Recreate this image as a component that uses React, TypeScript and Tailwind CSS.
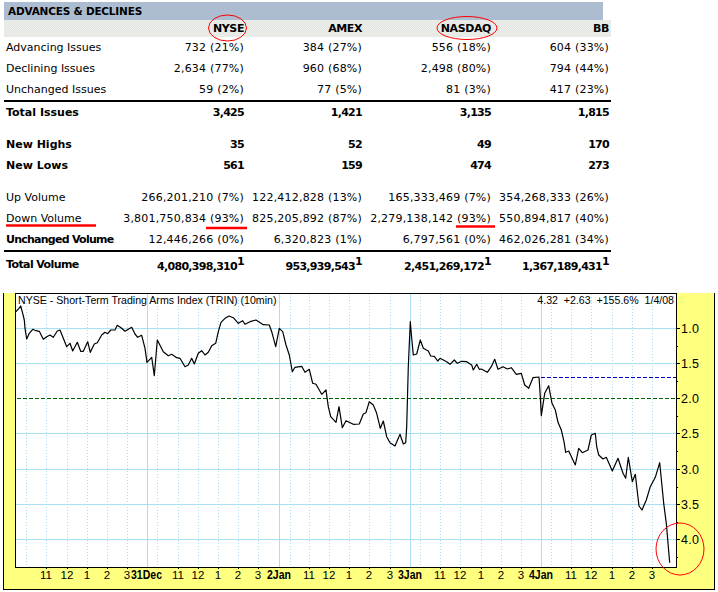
const rows = [
  { label: 'Advancing Issues', vals: ['732 (21%)', '384 (27%)', '556 (18%)', '604 (33%)'] },
  { label: 'Declining Issues', vals: ['2,634 (77%)', '960 (68%)', '2,498 (80%)', '794 (44%)'] },
  { label: 'Unchanged Issues', vals: ['59 (2%)', '77 (5%)', '81 (3%)', '417 (23%)'] },
];
const highLow = [
  { label: 'New Highs', vals: ['35', '52', '49', '170'] },
  { label: 'New Lows', vals: ['561', '159', '474', '273'] },
];
const volume = [
  { label: 'Up Volume', vals: ['266,201,210 (7%)', '122,412,828 (13%)', '165,333,469 (7%)', '354,268,333 (26%)'] },
  { label: 'Down Volume', vals: ['3,801,750,834 (93%)', '825,205,892 (87%)', '2,279,138,142 (93%)', '550,894,817 (40%)'] },
];

const grid = 'grid grid-cols-[116px_124px_118px_129px_118px] w-[607px] items-center';

function Row({ label, vals, bold, labelBold }: { label: string; vals: string[]; bold?: boolean; labelBold?: boolean }) {
  return (
    <div className={`${grid} h-[21px] ${bold ? 'font-bold' : ''}`}>
      <div className={`pl-[2px] whitespace-nowrap ${labelBold ? 'font-bold tracking-[-0.75px]' : ''}`}>{label}</div>
      {vals.map((v, i) => (
        <div key={i} className={`text-right whitespace-nowrap ${bold ? 'tracking-[-0.7px]' : 'tracking-[0.2px]'}`}>{v}</div>
      ))}
    </div>
  );
}

const pts5 = '48,65 57,55 62,48 68,70 73,90 75,115 80,147 88,130 98,118 108,122 118,124 130,148 140,140 150,135 160,142 172,123 180,120 190,145 200,170 210,160 218,183 232,157 242,184 250,184 263,155 271,187 283,162 292,158 305,135 315,127 323,131 332,120 345,120 352,106 365,115 375,124 385,118 395,112 405,132 413,142 425,136 435,175 441,217 455,202 463,257 472,150 490,185 505,197 515,193 530,203 540,205 555,230 565,225 575,205 583,222 595,190 605,182 615,195 625,187 635,167 647,160 655,125 663,97 675,85 687,78 700,83 715,100';
const pts7 = '8,92 15,103 30,95 48,90 70,104 88,105 95,125 107,170 118,115 128,125 138,165 148,195 157,245 165,232 185,229 195,247 208,238 218,280 228,283 245,313 258,300 265,350 272,380 288,397 297,350 307,413 318,392 340,403 358,402 370,372 378,368 388,335 400,345 410,370 421,415 430,393 440,440 450,458 465,468 480,433 490,462 497,458 500,410 505,230 511,95 515,145 520,195 530,192 541,150 550,175 565,183 572,198 583,199 593,213 600,205 620,215 630,223 643,210 652,220 665,214 680,215 695,225 700,240 710,223 718,238';
const pts9 = '10,237 28,247 40,230 50,208 60,238 75,230 88,237 100,233 115,253 130,250 140,285 152,295 165,263 183,261 187,320 190,377 200,310 212,287 222,340 232,360 240,397 250,420 258,455 263,487 272,483 292,525 302,475 313,488 330,480 340,435 352,430 356,470 362,495 375,507 385,502 403,543 420,505 435,550 443,565 451,502 463,575 472,553 483,648 492,660 505,630 517,590 532,562 545,518 557,640 565,700 575,818';

const toPage = (s: string, ox: number) =>
  s.split(' ').map(p => {
    const [x, y] = p.split(',').map(Number);
    return `${(x / 3 + ox).toFixed(1)},${(y / 3 + 290).toFixed(1)}`;
  }).join(' ');

const linePoints = [toPage(pts5, 0), toPage(pts7, 240), toPage(pts9, 478)].join(' ');

const solidV = [147, 279, 410, 541];
const dottedV = [26, 46, 67, 87, 107, 127, 157, 178, 198, 218, 238, 258, 290, 309, 329, 349, 369, 390, 420, 440, 460, 481, 501, 521, 551, 571, 591, 612, 632, 652];
const solidH = [328, 363, 433, 469, 504, 539];
const yLabels: [string, number][] = [['1.0', 328], ['1.5', 363], ['2.0', 398], ['2.5', 433], ['3.0', 469], ['3.5', 504], ['4.0', 539]];
const xLabels: [string, number][] = [
  ['11', 46], ['12', 67], ['1', 87], ['2', 107], ['3', 127],
  ['11', 178], ['12', 198], ['1', 218], ['2', 238], ['3', 258],
  ['11', 309], ['12', 329], ['1', 349], ['2', 369], ['3', 390],
  ['11', 440], ['12', 460], ['1', 481], ['2', 501], ['3', 521],
  ['11', 571], ['12', 591], ['1', 612], ['2', 632], ['3', 652],
];
const dayLabels: [string, number, number][] = [['31Dec', 131, 31], ['2Jan', 267, 24], ['3Jan', 398, 24], ['4Jan', 529, 24]];

function Chart() {
  return (
    <div className="w-[712px] h-[297px] ml-[3px] mt-[13px] bg-[#ffff80] border-l border-r border-b border-black">
      <svg width="712" height="297" viewBox="3 293 712 297" className="block -ml-px" style={{ fontFamily: '"Liberation Sans", Arial, sans-serif' }}>
        <rect x="16" y="293" width="660" height="274" fill="#fff" />
        <g stroke="#a8dcee" strokeWidth="1" strokeDasharray="1 2" shapeRendering="crispEdges">
          {dottedV.map(x => <line key={x} x1={x + 0.5} y1="294" x2={x + 0.5} y2="567" />)}
        </g>
        <g stroke="#a8e0f4" strokeWidth="1" shapeRendering="crispEdges">
          {solidV.map(x => <line key={x} x1={x + 0.5} y1="294" x2={x + 0.5} y2="567" />)}
          {solidH.map(y => <line key={y} x1="16" y1={y + 0.5} x2="676" y2={y + 0.5} />)}
        </g>
        <g strokeWidth="1" strokeDasharray="4 2" shapeRendering="crispEdges">
          <line x1="17" y1="398.5" x2="676" y2="398.5" stroke="#006400" />
          <line x1="541" y1="377.5" x2="676" y2="377.5" stroke="#0000c8" />
        </g>
        <polyline points={linePoints} fill="none" stroke="#000" strokeWidth="1.2" strokeLinejoin="round" />
        <g stroke="#000" strokeWidth="1" shapeRendering="crispEdges">
          <line x1="16" y1="293.5" x2="676" y2="293.5" />
          <line x1="16" y1="567.5" x2="676" y2="567.5" />
          <line x1="15.5" y1="293" x2="15.5" y2="568" />
          <line x1="676.5" y1="293" x2="676.5" y2="568" />
          {yLabels.map(([l, y]) => <line key={l} x1="677" y1={y + 0.5} x2="680" y2={y + 0.5} />)}
          {yLabels.map(([l, y]) => <line key={l} x1="677" y1={y + 18} x2="678" y2={y + 18} />)}
          {xLabels.map(([l, x]) => <line key={x} x1={x + 0.5} y1="568" x2={x + 0.5} y2="569" />)}
        </g>
        <text x="18" y="304" fontSize="10.6" fill="#000">NYSE - Short-Term Trading Arms Index (TRIN) (10min)</text>
        <text x="674" y="304" fontSize="10.6" textAnchor="end" xmlSpace="preserve" fill="#000">{'4.32  +2.63  +155.6%  1/4/08'}</text>
        {yLabels.map(([l, y]) => (
          <text key={l} x="681" y={y + 5} fontSize="12.5" letterSpacing="0.3" fill="#000">{l}</text>
        ))}
        {xLabels.map(([l, x]) => (
          <text key={x} x={x} y="579" fontSize="11.5" textAnchor="middle" fill="#000">{l}</text>
        ))}
        {dayLabels.map(([l, x, w]) => (
          <text key={l} x={x} y="579" fontSize="13" fontWeight="700" textLength={w} lengthAdjust="spacingAndGlyphs" fill="#000">{l}</text>
        ))}
      </svg>
    </div>
  );
}

function Total({ vals }: { vals: string[] }) {
  return (
    <div className={`${grid} h-[28px] font-bold`}>
      <div className="pl-[2px] -mt-[4px] tracking-[-0.6px]">Total Volume</div>
      {vals.map((v, i) => (
        <div key={i} className="text-right whitespace-nowrap tracking-[-0.7px]">
          {v}
          <sup className="text-[11px] -top-[5px]">1</sup>
        </div>
      ))}
    </div>
  );
}

export default function App() {
  return (
    <div
      className="relative w-[718px] h-[592px] bg-white overflow-hidden text-[11px] leading-none text-black"
      style={{ fontFamily: '"DejaVu Sans", Verdana, sans-serif' }}
    >
      <div className="pl-[4px] pt-[2px]">
        <div className="w-[599px] h-[18px] bg-[#adbdd1] flex items-center pl-[4px] font-bold tracking-[-0.2px] text-[10.5px]">
          ADVANCES &amp; DECLINES
        </div>
        <div className={`${grid} h-[17px] font-bold tracking-[-0.4px] bg-[#e9ebe6] bg-[conic-gradient(#e3e5e0_25%,#eef0eb_0_50%,#e3e5e0_0_75%,#eef0eb_0)] bg-[length:2px_2px]`}>
          <div />
          <div className="text-right">NYSE</div>
          <div className="text-right">AMEX</div>
          <div className="text-right">NASDAQ</div>
          <div className="text-right">BB</div>
        </div>
        {rows.map(r => <Row key={r.label} label={r.label} vals={r.vals} />)}
        <div className="w-[607px] h-[2px] bg-black" />
        <div className="h-[20px]">
          <Row label="Total Issues" vals={['3,425', '1,421', '3,135', '1,815']} bold />
        </div>
        <div className="h-[12px]" />
        {highLow.map(r => <Row key={r.label} label={r.label} vals={r.vals} bold />)}
        <div className="h-[11px]" />
        {volume.map(r => <Row key={r.label} label={r.label} vals={r.vals} />)}
        <Row label="Unchanged Volume" vals={['12,446,266 (0%)', '6,320,823 (1%)', '6,797,561 (0%)', '462,026,281 (34%)']} labelBold />
        <div className="w-[607px] h-[2px] bg-black" />
        <Total vals={['4,080,398,310', '953,939,543', '2,451,269,172', '1,367,189,431']} />
      </div>
      <Chart />
      <svg className="absolute inset-0 pointer-events-none" width="718" height="592" fill="none" stroke="#f00">
        <ellipse cx="227.5" cy="28" rx="19" ry="13" />
        <ellipse cx="467" cy="28" rx="30" ry="11.5" />
        <ellipse cx="680" cy="549" rx="24" ry="26" />
        <line x1="6" y1="225.5" x2="96" y2="225.5" strokeWidth="2.4" />
        <line x1="206" y1="228" x2="247" y2="228" strokeWidth="2.4" />
        <line x1="456" y1="226.5" x2="495" y2="226.5" strokeWidth="2.4" />
      </svg>
    </div>
  );
}
